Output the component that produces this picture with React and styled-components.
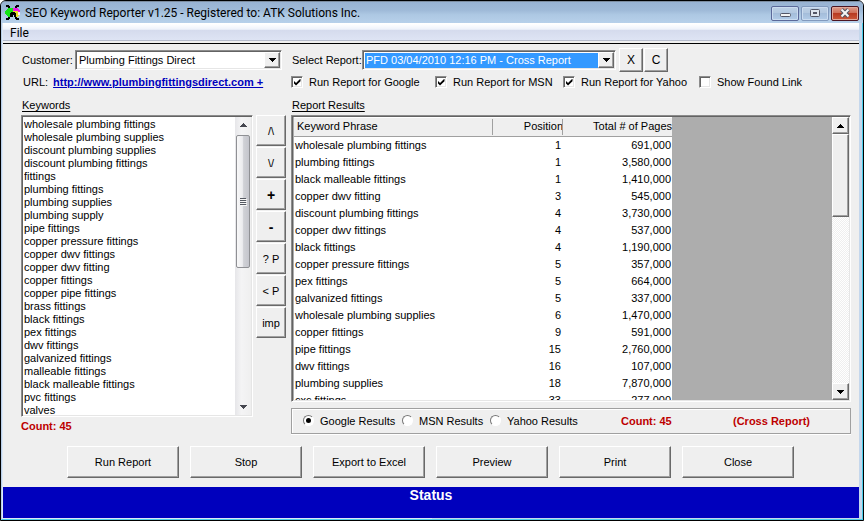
import React, { useState } from 'react';
import styled, { createGlobalStyle, css } from 'styled-components';

const GlobalStyle = createGlobalStyle`
  *, *::before, *::after { box-sizing: border-box; }
  html, body { margin: 0; padding: 0; }
  body, button, input, select {
    font-family: "Liberation Sans", Arial, sans-serif;
    font-size: 11px;
    color: #000;
  }
  body { background: #fff; }
`;

const sunken = css`
  border: 1px solid;
  border-color: #8c8c8c #fff #fff #8c8c8c;
  box-shadow: inset 1px 1px 0 #636363, inset -1px -1px 0 #e6e6e6;
`;

const raised = css`
  border: 1px solid;
  border-color: #fff #696969 #696969 #fff;
  box-shadow: inset -1px -1px 0 #a0a0a0;
  background: #efefef;
`;

const Window = styled.div`
  display: flex;
  flex-direction: column;
  height: 100vh;
  min-height: 420px;
  min-width: 820px;
  border: 1px solid #000;
  border-radius: 6px 6px 0 0;
  background: #b4cee8;
  overflow: hidden;
`;

const TitleBar = styled.header`
  display: flex;
  align-items: center;
  flex: none;
  height: 22px;
  padding: 1px 4px 0 4px;
  border-top: 1px solid #7d8da0;
  background: linear-gradient(#98b3d3 0, #9fbad8 40%, #adc8e3 60%, #b7d0ea 100%);
`;

const Title = styled.h1`
  flex: 1;
  margin: 0 0 0 4px;
  font: 400 12px/20px Roboto, "Segoe UI", sans-serif;
  white-space: nowrap;
`;

const Captions = styled.div`
  display: flex;
  gap: 2px;
`;

const CaptionButton = styled.button`
  display: grid;
  place-items: center;
  width: 28px;
  height: 15px;
  padding: 0;
  border: 1px solid ${(p) => (p.$kind === 'close' ? '#4b1421' : p.$kind === 'max' ? '#8199bd' : '#5b6999')};
  border-radius: 2px;
  background: ${(p) =>
    p.$kind === 'close'
      ? 'linear-gradient(#dd9c8b 0, #cf6f59 45%, #b83a22 50%, #cc593b 100%)'
      : 'linear-gradient(#bdd0e6 0, #b3c8e0 45%, #a4bdda 50%, #b2cce8 100%)'};
  box-shadow: inset 0 0 0 1px ${(p) => (p.$kind === 'close' ? '#e2a99b' : '#cbdcf0')};
`;

const Frame = styled.div`
  display: flex;
  flex-direction: column;
  flex: 1;
  min-height: 0;
  border: solid #b9cfe9;
  border-width: 0 1px 1px 1px;
  border-right-color: #49cdea;
  border-bottom-color: #49cdea;
  padding: 0 3px 1px 1px;
  background: linear-gradient(90deg, #dce8f6 50%, #c5d7ec 50%);
`;

const MenuBar = styled.nav`
  display: flex;
  align-items: center;
  flex: none;
  height: 21px;
  padding: 0 7px;
  border-top: 1px solid #fff;
  border-bottom: 1px solid #000;
  background: linear-gradient(#fff 0, #eef2fb 28%, #d5dbed 32%, #dee4f4 85%, #b6bccc 86%, #b6bccc 90%, #f0f0f0 91%);
`;

const MenuItem = styled.button`
  padding: 0 0 2px;
  border: 0;
  background: none;
  font: 12px/16px Roboto, "Segoe UI", sans-serif;
`;

const Body = styled.main`
  display: flex;
  flex-direction: column;
  flex: 1;
  min-height: 0;
  padding: 4px 8px 9px 18px;
  background: #efefef;
`;

const Split = styled.div`
  display: grid;
  grid-template-columns: 265px minmax(0, 1fr);
  column-gap: 5px;
  flex: none;
`;

const MainSplit = styled(Split)`
  grid-template-rows: minmax(0, 1fr);
  flex: 1;
  min-height: 0;
`;

const Field = styled.div`
  display: flex;
  align-items: center;
  height: 24px;
  white-space: nowrap;
`;

const FieldLabel = styled.label`
  flex: none;
  width: ${(p) => p.$width}px;
  padding-left: 1px;
  line-height: 16px;
`;

const Combo = styled.span`
  ${sunken}
  position: relative;
  display: flex;
  flex: none;
  width: ${(p) => p.$width}px;
  height: 20px;
  padding: 2px;
  background: #fff;
`;

const ComboSelect = styled.select`
  appearance: none;
  width: 100%;
  height: 15px;
  padding: 0 18px 0 1px;
  border: 0;
  outline: 0;
  border-radius: 0;
  line-height: 15px;
  background: ${(p) => (p.$active ? '#3399ff' : '#fff')};
  color: ${(p) => (p.$active ? '#fff' : '#000')};
`;

const ComboArrow = styled.span`
  ${raised}
  position: absolute;
  top: 1px;
  right: 1px;
  display: grid;
  place-items: center;
  width: 16px;
  height: 16px;
  pointer-events: none;
`;

const SmallButton = styled.button`
  ${raised}
  width: 24px;
  height: 24px;
  margin-left: 1px;
  padding: 0;
  font-size: 12px;
`;

const ComboButtons = styled.div`
  display: flex;
  margin-left: 2px;
`;

const UrlLink = styled.a`
  margin-left: 5px;
  color: #0000bd;
  font-weight: 700;
  line-height: 16px;
`;

const UrlRow = styled.div`
  display: flex;
  align-items: center;
  height: 20px;
  padding-left: 2px;
  white-space: nowrap;
`;

const Checks = styled.div`
  display: grid;
  grid-template-columns: 144px 128px 136px auto;
  align-items: center;
  height: 20px;
`;

const CheckLabel = styled.label`
  display: flex;
  align-items: center;
  gap: 6px;
  white-space: nowrap;
  line-height: 16px;
`;

const CheckBox = styled.input`
  ${sunken}
  appearance: none;
  display: grid;
  place-items: center;
  width: 12px;
  height: 12px;
  margin: 0;
  background: #fff;
  &:checked::after {
    content: "";
    width: 7px;
    height: 7px;
    background: #000;
    clip-path: polygon(0 30%, 36% 64%, 100% 0, 100% 38%, 36% 100%, 0 66%);
  }
`;

const Caption = styled.h2`
  margin: 0 0 0 1px;
  height: 23px;
  padding-top: 6px;
  font-size: 11px;
  font-weight: 400;
  line-height: 15px;
  text-decoration: underline;
  text-underline-offset: 2px;
`;

const LeftPane = styled.section`
  display: grid;
  grid-template-columns: minmax(0, 1fr) 30px;
  grid-template-rows: minmax(0, 1fr) 18px;
  column-gap: 3px;
`;

const ListBox = styled.div`
  ${sunken}
  display: flex;
  padding: 1px 1px 1px 2px;
  background: #fff;
  overflow: hidden;
`;

const Items = styled.ul`
  flex: 1;
  margin: 0;
  padding: 1px 0 0;
  list-style: none;
  overflow: hidden;
`;

const Item = styled.li`
  height: 13px;
  font-size: 11px;
  line-height: 13px;
  white-space: nowrap;
`;

const AeroBar = styled.div`
  display: flex;
  flex-direction: column;
  flex: none;
  width: 16px;
  padding: 6px 1px;
  background: linear-gradient(90deg, #e6e6e9, #f4f4f5 40%, #efefef);
`;

const AeroArrow = styled.span`
  display: grid;
  justify-items: center;
  flex: none;
  height: ${(p) => (p.$end ? 4 : 12)}px;
`;

const AeroThumb = styled.div`
  display: grid;
  place-items: center;
  height: 133px;
  border: 1px solid #8f9094;
  border-radius: 2px;
  background: linear-gradient(90deg, #f8f8f8 0, #ececef 45%, #d0d1d6 55%, #c4c5cc 100%);
`;

const Spacer = styled.div`
  flex: 1;
`;

const SideButtons = styled.div`
  display: flex;
  flex-direction: column;
  gap: 1px;
`;

const SideButton = styled.button`
  ${raised}
  width: 30px;
  height: 31px;
  padding: 0;
  font-size: ${(p) => (p.$bold ? 14 : 11)}px;
  font-weight: ${(p) => (p.$bold ? 700 : 400)};
`;

const Count = styled.strong`
  color: #bd0000;
  line-height: 18px;
  white-space: nowrap;
`;

const RightPane = styled.section`
  display: flex;
  flex-direction: column;
  min-width: 0;
  gap: 6px;
`;

const GridBox = styled.div`
  ${sunken}
  display: flex;
  flex: 1;
  min-height: 0;
  padding: 1px 1px 1px 2px;
  background: #adadad;
`;

const GridView = styled.div`
  flex: 1;
  overflow: hidden;
`;

const Table = styled.table`
  width: 378px;
  table-layout: fixed;
  border-collapse: separate;
  border-spacing: 0;
  background: #fff;
`;

const Head = styled.th`
  position: relative;
  width: ${(p) => p.$width}px;
  height: 20px;
  padding: ${(p) => (p.$right ? '0' : '0 0 0 3px')};
  border-bottom: 1px solid #a0a0a0;
  box-shadow: inset 0 1px 0 #fff;
  background: #efefef;
  font-weight: 400;
  line-height: 17px;
  text-align: ${(p) => (p.$right ? 'right' : 'left')};
  white-space: nowrap;
  &:not(:last-child)::after {
    content: "";
    position: absolute;
    top: 2px;
    bottom: 1px;
    right: 0;
    width: 1px;
    background: #a0a0a0;
  }
`;

const Cell = styled.td`
  height: 17px;
  padding: 0 ${(p) => p.$pad || 1}px 0 1px;
  line-height: 17px;
  text-align: ${(p) => (p.$right ? 'right' : 'left')};
  white-space: nowrap;
`;

const ClassicBar = styled.div`
  display: flex;
  flex-direction: column;
  flex: none;
  width: 17px;
  background: repeating-conic-gradient(#fff 0 25%, #efefef 0 50%) 0 0 / 2px 2px;
`;

const ClassicArrow = styled.button`
  ${raised}
  display: grid;
  place-items: center;
  height: 17px;
  padding: 0;
`;

const ClassicThumb = styled.div`
  ${raised}
  height: 83px;
`;

const ResultPanel = styled.div`
  display: flex;
  align-items: center;
  flex: none;
  height: 26px;
  margin-bottom: 1px;
  padding-left: 11px;
  border: 1px solid #a0a0a0;
  box-shadow: inset 1px 1px 0 #fff, 0 1px 0 #fff;
`;

const RadioLabel = styled.label`
  display: flex;
  align-items: center;
  flex: none;
  gap: 6px;
  width: ${(p) => p.$width}px;
  white-space: nowrap;
`;

const Radio = styled.input`
  appearance: none;
  display: grid;
  place-items: center;
  width: 11px;
  height: 11px;
  margin: 0 0 2px;
  border: 1px solid;
  border-color: #777 #fff #fff #777;
  border-radius: 50%;
  background: #fff;
  &:checked::after {
    content: "";
    width: 5px;
    height: 5px;
    border-radius: 50%;
    background: #000;
  }
`;

const PanelCount = styled(Count)`
  flex: none;
  width: 112px;
`;

const Actions = styled.div`
  display: grid;
  grid-template-columns: repeat(6, minmax(0, 112px));
  gap: 11px;
  flex: none;
  margin-top: 11px;
  padding-left: 46px;
`;

const ActionButton = styled.button`
  ${raised}
  height: 32px;
  padding: 0;
`;

const Status = styled.footer`
  flex: none;
  height: 31px;
  background: #0000bd;
  color: #fff;
  font-size: 14px;
  font-weight: 700;
  line-height: 17px;
  text-align: center;
`;

const AppIcon = () => (
  <svg width="16" height="16" viewBox="0 0 16 16" shapeRendering="crispEdges" aria-hidden="true">
    <path d="M1 0h3v1h1v2H3V2H1zM11 0h3v2h-2v1h-2V1h1zM3 12h2v2H4v1H1v-2h2zM10 12h2v1h2v2h-3v-1h-1z" fill="#000" />
    <path d="M2 4h1V3h5v9H3v-1H2v-1H1V9H0V6h1V5h1z" fill="#14e414" />
    <path d="M8 3h5v1h1v1h1v2H8z" fill="#f014e6" />
    <path d="M8 6h5v2h2v2h-1v1h-1v1H9z" fill="#e6dc28" />
    <path d="M13 7h2v3h-2z" fill="#f4f4f4" />
    <path d="M6 7h4v1h1v4H9v-2H8v2H5V8h1z" fill="#000" />
  </svg>
);

const Triangle = ({ up, small }) => (
  <svg width="7" height="4" viewBox="0 0 7 4" shapeRendering="crispEdges" aria-hidden="true">
    <path d={up ? 'M3 0h1v1h1v1h1v1h1v1H0V3h1V2h1V1h1z' : 'M0 0h7v1H6v1H5v1H4v1H3V3H2V2H1V1H0z'} fill={small ? '#45474f' : '#000'} />
  </svg>
);

const Grip = () => (
  <svg width="7" height="8" viewBox="0 0 7 8" shapeRendering="crispEdges" aria-hidden="true">
    <path d="M0 0h6v1H0zM0 2h6v1H0zM0 4h6v1H0zM0 6h6v1H0z" fill="#555962" />
    <path d="M1 1h6v1H1zM1 3h6v1H1zM1 5h6v1H1zM1 7h6v1H1z" fill="#f7f7f7" />
  </svg>
);

const CaptionGlyph = ({ kind }) => (
  <svg width="12" height="10" viewBox="0 0 12 10" aria-hidden="true">
    {kind === 'min' && <rect x="1.5" y="5.5" width="10" height="3" rx="1" fill="#f4f4f4" stroke="#535666" />}
    {kind === 'max' && (
      <>
        <rect x="1.5" y="1.5" width="9" height="7" rx="1" fill="#dfe6ef" stroke="#535666" />
        <rect x="4.5" y="4.5" width="3" height="1" fill="#9db4d0" stroke="#535666" />
      </>
    )}
    {kind === 'close' && (
      <>
        <path d="M2.500 1.500L9.500 8.500M9.500 1.500L2.500 8.500" stroke="#535666" strokeWidth="4" />
        <path d="M2.500 1.500L9.500 8.500M9.500 1.500L2.500 8.500" stroke="#f6f6f6" strokeWidth="2" />
      </>
    )}
  </svg>
);

const keywords = [
  'wholesale plumbing fittings', 'wholesale plumbing supplies', 'discount plumbing supplies',
  'discount plumbing fittings', 'fittings', 'plumbing fittings', 'plumbing supplies',
  'plumbing supply', 'pipe fittings', 'copper pressure fittings', 'copper dwv fittings',
  'copper dwv fitting', 'copper fittings', 'copper pipe fittings', 'brass fittings',
  'black fittings', 'pex fittings', 'dwv fittings', 'galvanized fittings',
  'malleable fittings', 'black malleable fittings', 'pvc fittings', 'valves',
];

const results = [
  ['wholesale plumbing fittings', '1', '691,000'],
  ['plumbing fittings', '1', '3,580,000'],
  ['black malleable fittings', '1', '1,410,000'],
  ['copper dwv fitting', '3', '545,000'],
  ['discount plumbing fittings', '4', '3,730,000'],
  ['copper dwv fittings', '4', '537,000'],
  ['black fittings', '4', '1,190,000'],
  ['copper pressure fittings', '5', '357,000'],
  ['pex fittings', '5', '664,000'],
  ['galvanized fittings', '5', '337,000'],
  ['wholesale plumbing supplies', '6', '1,470,000'],
  ['copper fittings', '9', '591,000'],
  ['pipe fittings', '15', '2,760,000'],
  ['dwv fittings', '16', '107,000'],
  ['plumbing supplies', '18', '7,870,000'],
  ['cxc fittings', '33', '277,000'],
];

const checks = [
  ['Run Report for Google', true],
  ['Run Report for MSN', true],
  ['Run Report for Yahoo', true],
  ['Show Found Link', false],
];

const sources = [
  ['Google Results', 99],
  ['MSN Results', 88],
  ['Yahoo Results', 131],
];

const sideActions = [
  ['/\\', 'Move up'], ['\\/', 'Move down'], ['+', 'Add', true], ['-', 'Remove', true],
  ['? P', 'Query position'], ['< P', 'Previous position'], ['imp', 'Import'],
];

const actions = ['Run Report', 'Stop', 'Export to Excel', 'Preview', 'Print', 'Close'];

function ComboBox({ id, width, active, value }) {
  return (
    <Combo $width={width}>
      <ComboSelect id={id} $active={active} defaultValue={value}>
        <option>{value}</option>
      </ComboSelect>
      <ComboArrow><Triangle /></ComboArrow>
    </Combo>
  );
}

export default function App() {
  const [source, setSource] = useState('Google Results');
  return (
    <Window>
      <GlobalStyle />
      <TitleBar>
        <AppIcon />
        <Title>SEO Keyword Reporter v1.25 - Registered to: ATK Solutions Inc.</Title>
        <Captions>
          <CaptionButton $kind="min" aria-label="Minimize"><CaptionGlyph kind="min" /></CaptionButton>
          <CaptionButton $kind="max" aria-label="Maximize"><CaptionGlyph kind="max" /></CaptionButton>
          <CaptionButton $kind="close" aria-label="Close window"><CaptionGlyph kind="close" /></CaptionButton>
        </Captions>
      </TitleBar>
      <Frame>
        <MenuBar><MenuItem>File</MenuItem></MenuBar>
        <Body>
          <Split>
            <Field>
              <FieldLabel htmlFor="customer" $width={54}>Customer:</FieldLabel>
              <ComboBox id="customer" width={207} value="Plumbing Fittings Direct" />
            </Field>
            <Field>
              <FieldLabel htmlFor="report" $width={71}>Select Report:</FieldLabel>
              <ComboBox id="report" width={254} active value="PFD 03/04/2010 12:16 PM - Cross Report" />
              <ComboButtons>
                <SmallButton>X</SmallButton>
                <SmallButton>C</SmallButton>
              </ComboButtons>
            </Field>
            <UrlRow>
              URL: <UrlLink href="#url">http://www.plumbingfittingsdirect.com +</UrlLink>
            </UrlRow>
            <Checks>
              {checks.map(([label, on]) => (
                <CheckLabel key={label}>
                  <CheckBox type="checkbox" defaultChecked={on} />
                  {label}
                </CheckLabel>
              ))}
            </Checks>
            <Caption>Keywords</Caption>
            <Caption>Report Results</Caption>
          </Split>
          <MainSplit>
            <LeftPane>
              <ListBox>
                <Items>
                  {keywords.map((k) => <Item key={k}>{k}</Item>)}
                </Items>
                <AeroBar>
                  <AeroArrow><Triangle up small /></AeroArrow>
                  <AeroThumb><Grip /></AeroThumb>
                  <Spacer />
                  <AeroArrow $end><Triangle small /></AeroArrow>
                </AeroBar>
              </ListBox>
              <SideButtons>
                {sideActions.map(([text, name, bold]) => (
                  <SideButton key={name} $bold={bold} aria-label={name}>{text}</SideButton>
                ))}
              </SideButtons>
              <Count>Count: 45</Count>
            </LeftPane>
            <RightPane>
              <GridBox>
                <GridView>
                  <Table>
                    <thead>
                      <tr>
                        <Head $width={199}>Keyword Phrase</Head>
                        <Head $width={70} $right>Position</Head>
                        <Head $width={109} $right>Total # of Pages</Head>
                      </tr>
                    </thead>
                    <tbody>
                      {results.map(([phrase, position, pages]) => (
                        <tr key={phrase}>
                          <Cell>{phrase}</Cell>
                          <Cell $right $pad={2}>{position}</Cell>
                          <Cell $right>{pages}</Cell>
                        </tr>
                      ))}
                    </tbody>
                  </Table>
                </GridView>
                <ClassicBar>
                  <ClassicArrow aria-label="Scroll up"><Triangle up /></ClassicArrow>
                  <ClassicThumb />
                  <Spacer />
                  <ClassicArrow aria-label="Scroll down"><Triangle /></ClassicArrow>
                </ClassicBar>
              </GridBox>
              <ResultPanel role="radiogroup" aria-label="Result source">
                {sources.map(([label, width]) => (
                  <RadioLabel key={label} $width={width}>
                    <Radio type="radio" name="source" checked={source === label} onChange={() => setSource(label)} />
                    {label}
                  </RadioLabel>
                ))}
                <PanelCount>Count: 45</PanelCount>
                <Count>(Cross Report)</Count>
              </ResultPanel>
            </RightPane>
          </MainSplit>
          <Actions>
            {actions.map((a) => <ActionButton key={a}>{a}</ActionButton>)}
          </Actions>
        </Body>
        <Status>Status</Status>
      </Frame>
    </Window>
  );
}
